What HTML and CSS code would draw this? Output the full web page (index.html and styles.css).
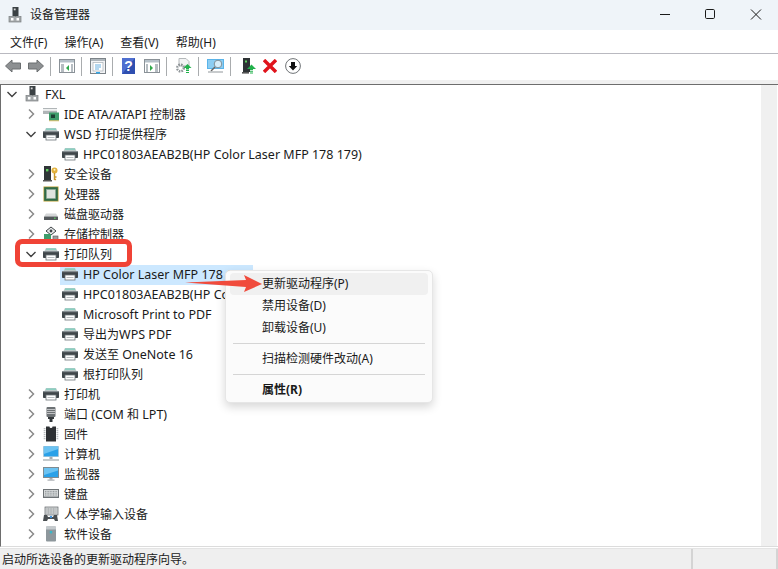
FILE: index.html
```html
<!DOCTYPE html>
<html lang="zh-CN">
<head>
<meta charset="utf-8">
<title>设备管理器</title>
<link rel="stylesheet" href="styles.css">
</head>
<body>
<svg class="defs" width="0" height="0">
  <defs>
    <symbol id="printer" viewBox="0 0 16 16">
      <path d="M3 2h10l1.500 3h-13z" fill="#bcc9c8"/>
      <rect x="3" y="2.500" width="10" height="1.300" fill="#7fd0bf"/>
      <rect x="0" y="5" width="16" height="7" rx=".8" fill="#3f464a"/>
      <rect x="0" y="5" width="16" height="1.200" fill="#868e92"/>
      <rect x="3" y="9" width="10" height="5" fill="#fff" stroke="#6d7478" stroke-width=".8"/>
      <path d="M4.500 11.500h7" stroke="#a6acb0" stroke-width=".8"/>
    </symbol>
    <symbol id="pc" viewBox="0 0 16 16">
      <rect x="5.500" y="0" width="6" height="9" fill="#3b4144"/>
      <rect x="6.800" y="1.500" width="1.800" height="1.800" fill="#d9d9d9"/>
      <rect x="8" y="9" width="1.200" height="2" fill="#555"/>
      <rect x="2" y="9.500" width="12" height="5.500" fill="#a5a9ab" stroke="#7b7f81" stroke-width=".7"/>
      <rect x="4" y="11" width="2.500" height="2.500" fill="#fff"/>
      <rect x="9.500" y="11" width="2.500" height="2.500" fill="#fff"/>
    </symbol>
    <symbol id="ide" viewBox="0 0 16 16">
      <rect x="0" y="2" width="14" height="6" fill="#b0b5b7"/>
      <rect x="0" y="3" width="14" height="1.800" fill="#f0f2f2"/>
      <rect x="6" y="6.500" width="10" height="8" fill="#3e9c6b"/>
      <rect x="8" y="8.500" width="4" height="3.500" fill="#1c3f33"/>
      <path d="M7 14v1.400M9 14v1.400M11 14v1.400M13 14v1.400M15 14v1.400" stroke="#d8a938"/>
    </symbol>
    <symbol id="security" viewBox="0 0 16 16">
      <rect x="1" y="0" width="7" height="15" fill="#2f3537"/>
      <rect x="3" y="3" width="2.400" height="2.400" fill="#5fd05f"/>
      <rect x="0" y="14" width="9" height="1.500" fill="#555"/>
      <circle cx="11.500" cy="4.500" r="3" fill="#e2b13c"/>
      <circle cx="11.500" cy="3.800" r="1" fill="#fff3c4"/>
      <path d="M11.500 7v7M11.500 11h2M11.500 13.500h1.600" stroke="#c8962a" stroke-width="1.400"/>
    </symbol>
    <symbol id="cpu" viewBox="0 0 16 16">
      <rect x=".5" y=".5" width="15" height="15" fill="#b99b2e"/>
      <rect x="1.200" y="1.200" width="13.600" height="13.600" fill="#2f6b4a"/>
      <rect x="3.500" y="3.500" width="9" height="9" fill="#dfe4df" stroke="#8fa896" stroke-width=".6"/>
    </symbol>
    <symbol id="disk" viewBox="0 0 16 16">
      <path d="M3 7.500h10l2 3H1z" fill="#d4d6d7"/>
      <rect x="1" y="10.500" width="14" height="3.500" rx=".5" fill="#54595c"/>
      <rect x="11" y="11.600" width="1.600" height="1.200" fill="#5fd05f"/>
    </symbol>
    <symbol id="storage" viewBox="0 0 16 16">
      <path d="M8 1l5 4-5 4-5-4z" fill="#e7e9e9" stroke="#3f4548"/>
      <circle cx="8" cy="5" r="1.400" fill="#3f4548"/>
      <rect x="1" y="8" width="7" height="6" fill="#3e9c6b"/>
      <rect x="10" y="10" width="5" height="5" fill="#9a9ea0" stroke="#555" stroke-width=".6"/>
    </symbol>
    <symbol id="port" viewBox="0 0 16 16">
      <rect x="3.500" y="1" width="9" height="10" rx="1" fill="#6c7174"/>
      <path d="M4 3.500h8M4 5.500h8M4 7.500h8" stroke="#c8cbcc" stroke-width=".9"/>
      <path d="M5 11h6v2H9.500v3h-3v-3H5z" fill="#33383b"/>
    </symbol>
    <symbol id="chip" viewBox="0 0 16 16">
      <path d="M3 0.500h3.500a1.500 1.500 0 0 0 3 0H13v15H3z" fill="#2d3033"/>
      <path d="M1.600 2v12M14.400 2v12" stroke="#b8bcbe" stroke-width="1.800" stroke-dasharray="1.200 .8"/>
    </symbol>
    <symbol id="computer" viewBox="0 0 16 16">
      <rect x="0" y="0" width="16" height="11" fill="#c9d3d8"/>
      <rect x=".8" y=".6" width="14.400" height="9.800" fill="#2aa1e8"/>
      <path d="M.8 .6h14.400v2.500L.8 8z" fill="#6cc3f2"/>
      <rect x="6.500" y="11" width="3" height="2" fill="#a5acb0"/>
      <rect x="0" y="13" width="16" height="2" fill="#c5cacc"/>
    </symbol>
    <symbol id="monitor" viewBox="0 0 16 16">
      <rect x="0" y="1" width="16" height="11" fill="#7d8b92"/>
      <rect x="1" y="2" width="14" height="9" fill="#2aa1e8"/>
      <path d="M1 2h14v2.400L1 9z" fill="#6cc3f2"/>
      <rect x="6.500" y="12" width="3" height="1.600" fill="#a5acb0"/>
      <rect x="4.500" y="13.600" width="7" height="1" fill="#9aa0a4"/>
    </symbol>
    <symbol id="keyboard" viewBox="0 0 16 16">
      <rect x="0" y="3" width="16" height="9" fill="#6e7376"/>
      <rect x="1" y="4" width="14" height="6.600" fill="#d6d9da"/>
      <path d="M2 5.400h12M2 7.200h12M2 9h12" stroke="#8a8f92" stroke-width=".9" stroke-dasharray="1 .6"/>
    </symbol>
    <symbol id="hid" viewBox="0 0 16 16">
      <rect x="2" y="1" width="13" height="8" fill="#d6d9da" stroke="#606568" stroke-width=".7"/>
      <path d="M3.500 3h10M3.500 5h10M3.500 7h10" stroke="#7d8285" stroke-dasharray="1 .6" stroke-width=".9"/>
      <path d="M0 15l1-6h3l1 2h5l1-2h3l1 6h-3l-1-2H5l-1 2z" fill="#4a4f52"/>
      <circle cx="8" cy="11" r="1.200" fill="#3f8fd8"/>
    </symbol>
    <symbol id="software" viewBox="0 0 16 16">
      <rect x="3" y="0.500" width="10" height="15" rx="1" fill="#8e979c"/>
      <rect x="3" y="0.500" width="10" height="3" fill="#c4cacd"/>
      <rect x="6.800" y="5" width="2.400" height="2.400" fill="#38b6c8"/>
    </symbol>
  </defs>
</svg>

<div class="window">
  <header class="titlebar">
    <svg class="app-icon"><use href="#pc"/></svg>
    <span class="title">设备管理器</span>
    <div class="controls">
      <svg class="ctl" viewBox="0 0 46 30"><path d="M20 14.500h10" stroke="#1a1a1a" stroke-width="1"/></svg>
      <svg class="ctl" viewBox="0 0 46 30"><rect x="19.500" y="9.500" width="9" height="9" rx="1.200" fill="none" stroke="#1a1a1a"/></svg>
      <svg class="ctl" viewBox="0 0 46 30"><path d="M19 9.500l10 10M29 9.500l-10 10" stroke="#1a1a1a" fill="none"/></svg>
    </div>
  </header>

  <nav class="menubar">
    <span class="menu-item">文件(F)</span>
    <span class="menu-item">操作(A)</span>
    <span class="menu-item">查看(V)</span>
    <span class="menu-item">帮助(H)</span>
  </nav>

  <div class="toolbar">
    <svg class="tb tb-arrow" viewBox="0 0 16 14"><path d="M.5 7L7 1v3h8.500v6H7v3z" fill="#8d9092" stroke="#6b6e70"/></svg>
    <svg class="tb tb-arrow" viewBox="0 0 16 14"><path d="M15.500 7L9 1v3H.5v6H9v3z" fill="#8d9092" stroke="#6b6e70"/></svg>
    <i class="tb-sep"></i>
    <svg class="tb" viewBox="0 0 16 16"><rect x=".5" y="1.500" width="15" height="13" fill="#fff" stroke="#8a9197"/><rect x="1" y="2" width="14" height="2.500" fill="#b5c0c8"/><path d="M2 7h3M2 9h3M2 11h3M2 13h3M12 7h2M12 9h2M12 11h2M12 13h2" stroke="#6d7a84"/><path d="M10 7v6L7 10z" fill="#2fa84a"/></svg>
    <i class="tb-sep"></i>
    <svg class="tb" viewBox="0 0 16 16"><rect x=".5" y=".5" width="15" height="15" fill="#f3f4f6" stroke="#7c8388"/><rect x="1" y="1" width="14" height="2" fill="#aeb6bc"/><rect x="3" y="4.500" width="10" height="8.500" fill="#fff" stroke="#a8b0b6" stroke-width=".7"/><path d="M5 7h6M5 9h6M5 11h4" stroke="#58a6dc" stroke-width=".9"/><rect x="6" y="14" width="4" height="1.500" fill="#35a7e8"/></svg>
    <i class="tb-sep"></i>
    <svg class="tb tb-help" viewBox="0 0 13 16"><rect width="13" height="16" fill="#2f4fb0"/><path d="M0 0h13L0 16z" fill="#4f6fd0"/><text x="6.500" y="13" class="help-q">?</text></svg>
    <svg class="tb tb-gap" viewBox="0 0 16 16"><rect x=".5" y="1.500" width="15" height="13" fill="#fff" stroke="#8a9197"/><rect x="1" y="2" width="14" height="2.500" fill="#b5c0c8"/><path d="M2 7h2M2 9h2M2 11h2M2 13h2M11 7h3M11 9h3M11 11h3M11 13h3" stroke="#6d7a84"/><path d="M6 7v6l3-3z" fill="#2fa84a"/></svg>
    <i class="tb-sep"></i>
    <svg class="tb tb-wide" viewBox="0 0 17 16"><path d="M4 .5h7l3 3V8H4z" fill="#f2f3f4" stroke="#b4b8ba"/><circle cx="5.500" cy="10" r="3.300" fill="none" stroke="#8f9598" stroke-width="2.400" stroke-dasharray="1.600 1"/><path d="M12.500 6l4 4H14v1.500h-3V10H8.500z" fill="#22b14c"/><path d="M11 12.500h3M11 14.500h3" stroke="#22b14c" stroke-width="1.200"/></svg>
    <i class="tb-sep"></i>
    <svg class="tb tb-wide" viewBox="0 0 17 16"><rect y="1" width="17" height="10" fill="#5ab4ea"/><rect x="1" y="2" width="15" height="8" fill="#8ccdf2"/><circle cx="11" cy="6" r="3.800" fill="#d6edf9" stroke="#7f8f98"/><path d="M8 9l-4 4" stroke="#666" stroke-width="1.500"/><path d="M1 14h15" stroke="#b0b5b8" stroke-width="1.400"/></svg>
    <i class="tb-sep"></i>
    <svg class="tb tb-server" viewBox="0 0 14 16"><rect x="1" y="0" width="7" height="14" fill="#2d3234"/><rect x="3" y="2.500" width="2" height="2" fill="#5fd05f"/><rect y="14" width="7" height="1.600" fill="#555"/><path d="M9.500 6.500l4.500 4.500h-3v1H8v-1H5z" fill="#22b14c"/><path d="M8 13.200h3M8 15h3" stroke="#22b14c" stroke-width="1.100"/></svg>
    <svg class="tb tb-x" viewBox="0 0 14 14"><path d="M1 1l12 12M13 1L1 13" stroke="#e0141c" stroke-width="3.400"/></svg>
    <svg class="tb tb-down" viewBox="0 0 16 16"><circle cx="8" cy="8" r="7.400" fill="#fff" stroke="#6f7376"/><path d="M8 12.500L3.800 8H6V4h4v4h2.200z" fill="#111"/></svg>
  </div>

  <div class="strip"></div>

  <main class="content">
    <div class="tree">
      <div class="row lv0"><svg class="chev" viewBox="0 0 12 12"><path d="M1.500 4l4.500 4.500L10.500 4"/></svg><svg class="ico"><use href="#pc"/></svg><span class="lat">FXL</span></div>
      <div class="row lv1"><svg class="chev gray" viewBox="0 0 12 12"><path d="M4 1.500L8.500 6 4 10.500"/></svg><svg class="ico"><use href="#ide"/></svg><span><span class="lat">IDE ATA/ATAPI </span>控制器</span></div>
      <div class="row lv1"><svg class="chev" viewBox="0 0 12 12"><path d="M1.500 4l4.500 4.500L10.500 4"/></svg><svg class="ico"><use href="#printer"/></svg><span><span class="lat">WSD </span>打印提供程序</span></div>
      <div class="row lv2"><svg class="ico"><use href="#printer"/></svg><span class="lat">HPC01803AEAB2B(HP Color Laser MFP 178 179)</span></div>
      <div class="row lv1"><svg class="chev gray" viewBox="0 0 12 12"><path d="M4 1.500L8.500 6 4 10.500"/></svg><svg class="ico"><use href="#security"/></svg><span>安全设备</span></div>
      <div class="row lv1"><svg class="chev gray" viewBox="0 0 12 12"><path d="M4 1.500L8.500 6 4 10.500"/></svg><svg class="ico"><use href="#cpu"/></svg><span>处理器</span></div>
      <div class="row lv1"><svg class="chev gray" viewBox="0 0 12 12"><path d="M4 1.500L8.500 6 4 10.500"/></svg><svg class="ico"><use href="#disk"/></svg><span>磁盘驱动器</span></div>
      <div class="row lv1"><svg class="chev gray" viewBox="0 0 12 12"><path d="M4 1.500L8.500 6 4 10.500"/></svg><svg class="ico"><use href="#storage"/></svg><span>存储控制器</span></div>
      <div class="row lv1"><svg class="chev" viewBox="0 0 12 12"><path d="M1.500 4l4.500 4.500L10.500 4"/></svg><svg class="ico"><use href="#printer"/></svg><span>打印队列</span></div>
      <div class="row lv2 selected"><svg class="ico"><use href="#printer"/></svg><span class="lat">HP Color Laser MFP 178 179</span></div>
      <div class="row lv2"><svg class="ico"><use href="#printer"/></svg><span class="lat">HPC01803AEAB2B(HP Color Laser MFP 178 179)</span></div>
      <div class="row lv2"><svg class="ico"><use href="#printer"/></svg><span class="lat">Microsoft Print to PDF</span></div>
      <div class="row lv2"><svg class="ico"><use href="#printer"/></svg><span>导出为<span class="lat">WPS PDF</span></span></div>
      <div class="row lv2"><svg class="ico"><use href="#printer"/></svg><span>发送至<span class="lat"> OneNote 16</span></span></div>
      <div class="row lv2"><svg class="ico"><use href="#printer"/></svg><span>根打印队列</span></div>
      <div class="row lv1"><svg class="chev gray" viewBox="0 0 12 12"><path d="M4 1.500L8.500 6 4 10.500"/></svg><svg class="ico"><use href="#printer"/></svg><span>打印机</span></div>
      <div class="row lv1"><svg class="chev gray" viewBox="0 0 12 12"><path d="M4 1.500L8.500 6 4 10.500"/></svg><svg class="ico"><use href="#port"/></svg><span>端口<span class="lat"> (COM </span>和<span class="lat"> LPT)</span></span></div>
      <div class="row lv1"><svg class="chev gray" viewBox="0 0 12 12"><path d="M4 1.500L8.500 6 4 10.500"/></svg><svg class="ico"><use href="#chip"/></svg><span>固件</span></div>
      <div class="row lv1"><svg class="chev gray" viewBox="0 0 12 12"><path d="M4 1.500L8.500 6 4 10.500"/></svg><svg class="ico"><use href="#computer"/></svg><span>计算机</span></div>
      <div class="row lv1"><svg class="chev gray" viewBox="0 0 12 12"><path d="M4 1.500L8.500 6 4 10.500"/></svg><svg class="ico"><use href="#monitor"/></svg><span>监视器</span></div>
      <div class="row lv1"><svg class="chev gray" viewBox="0 0 12 12"><path d="M4 1.500L8.500 6 4 10.500"/></svg><svg class="ico"><use href="#keyboard"/></svg><span>键盘</span></div>
      <div class="row lv1"><svg class="chev gray" viewBox="0 0 12 12"><path d="M4 1.500L8.500 6 4 10.500"/></svg><svg class="ico"><use href="#hid"/></svg><span>人体学输入设备</span></div>
      <div class="row lv1"><svg class="chev gray" viewBox="0 0 12 12"><path d="M4 1.500L8.500 6 4 10.500"/></svg><svg class="ico"><use href="#software"/></svg><span>软件设备</span></div>
    </div>
    <div class="scrollbar"></div>
  </main>

  <footer class="statusbar">
    <span class="status-text">启动所选设备的更新驱动程序向导。</span>
    <i class="status-pane"></i>
    <i class="status-pane status-end"></i>
  </footer>
</div>

<div class="highlight-box"></div>

<div class="ctx-menu">
  <div class="ctx-item hover">更新驱动程序(P)</div>
  <div class="ctx-item">禁用设备(D)</div>
  <div class="ctx-item">卸载设备(U)</div>
  <div class="ctx-sep"></div>
  <div class="ctx-item">扫描检测硬件改动(A)</div>
  <div class="ctx-sep"></div>
  <div class="ctx-item bold">属性(R)</div>
</div>

<svg class="red-arrow" viewBox="0 0 78 18"><path d="M0 7.500L61 5 59 0 77 9 59 17 61 12z" fill="#f04b3c"/></svg>
</body>
</html>
```

FILE: styles.css
```css
* { box-sizing: border-box; }
html, body { margin: 0; padding: 0; height: 100%; overflow: hidden; }
body {
  font-family: "Noto Sans", "Noto Sans CJK SC", sans-serif;
  font-size: 12px;
  color: #1a1a1a;
  background: #fff;
  position: relative;
}
.defs { position: absolute; }
.window { display: flex; flex-direction: column; height: 569px; width: 778px; }

.titlebar {
  height: 30px;
  background: #eff4f9;
  display: flex;
  align-items: center;
  padding-left: 7px;
  flex: none;
}
.app-icon { width: 16px; height: 16px; margin-right: 7px; }
.title { font-size: 12px; margin-bottom: 2px; }
.controls { margin-left: auto; display: flex; }
.ctl { width: 46px; height: 30px; display: block; }

.menubar {
  height: 24px;
  flex: none;
  display: flex;
  align-items: center;
  gap: 17px;
  padding-left: 10px;
  border-bottom: 1px solid #b9b9c0;
  background: #fff;
}
.menu-item { white-space: nowrap; }

.toolbar {
  height: 26px;
  flex: none;
  display: flex;
  align-items: center;
  padding: 0 0 2px 5px;
  background: #fff;
}
.tb { width: 16px; height: 16px; flex: none; display: block; }
.tb-arrow { height: 14px; margin-right: 7px; }
.tb-arrow + .tb-arrow { margin-right: 0; }
.tb-sep { width: 1px; height: 19px; background: #a9acae; margin: 0 8px 0 6px; flex: none; }
.tb-help { width: 13px; margin-left: 1px; }
.help-q { font: bold 14px "Liberation Sans", sans-serif; fill: #fff; text-anchor: middle; }
.tb-gap { margin-left: 9px; }
.tb-wide { width: 17px; }
.tb-server { width: 14px; margin-left: 3px; }
.tb-x { width: 14px; height: 14px; margin-left: 7px; }
.tb-down { margin-left: 8px; }

.strip { height: 4px; flex: none; background: #f0f0f0; border-bottom: 0; }

.content {
  flex: 1;
  min-height: 0;
  display: flex;
  border-top: 1px solid #6d6d6d;
  border-left: 1px solid #6d6d6d;
  border-bottom: 1px solid #dcdcdc;
  margin-bottom: 1px;
}
.tree { flex: 1; min-width: 0; overflow: hidden; background: #fff; }
.scrollbar { width: 16px; background: #f0f0f0; margin-right: 1px; }

.row { height: 20px; display: flex; align-items: center; white-space: nowrap; position: relative; padding-bottom: 2px; }
.lat { font-size: 12.500px; }
.lv0 { padding-left: 5px; }
.lv1 { padding-left: 24px; }
.lv2 { padding-left: 61px; }
.chev { width: 12px; height: 12px; margin-right: 6px; flex: none; }
.chev path { fill: none; stroke: #404040; stroke-width: 1.4; }
.chev.gray path { stroke: #8a8a8a; stroke-width: 1.5; }
.ico { width: 16px; height: 16px; margin-right: 5px; flex: none; }
.selected { background: linear-gradient(#cce8ff, #cce8ff) no-repeat 59px 0 / 193px 100%; }

.statusbar {
  height: 21px;
  flex: none;
  background: #efefef;
  display: flex;
  align-items: center;
  padding-left: 2px;
  border-top: 1px solid #e4e4e4;
}
.status-text { flex: 1; }
.status-pane { width: 85px; height: 100%; border-left: 2px solid #d4d4d4; flex: none; }
.status-end { width: 2px; margin-left: 0; }

.highlight-box {
  position: absolute;
  left: 15px;
  top: 239px;
  width: 117px;
  height: 28px;
  border: 5.500px solid #f04336;
  border-radius: 7px;
}

.ctx-menu {
  position: absolute;
  left: 225px;
  top: 270px;
  width: 208px;
  height: 133px;
  background: #fbfbfb;
  border: 1px solid #e6e6e6;
  border-radius: 5px;
  box-shadow: 0 4px 10px rgba(0, 0, 0, .16);
  padding: 2px 4px;
}
.ctx-item { height: 22px; line-height: 22px; padding-left: 32px; border-radius: 4px; white-space: nowrap; }
.ctx-item.hover { background: #f0f0f0; }
.ctx-item.bold { font-weight: 700; }
.ctx-sep { height: 1px; background: #d5d5d5; margin: 4px 3px 4px 3px; }

.red-arrow { position: absolute; left: 185px; top: 275px; width: 78px; height: 18px; }
```
